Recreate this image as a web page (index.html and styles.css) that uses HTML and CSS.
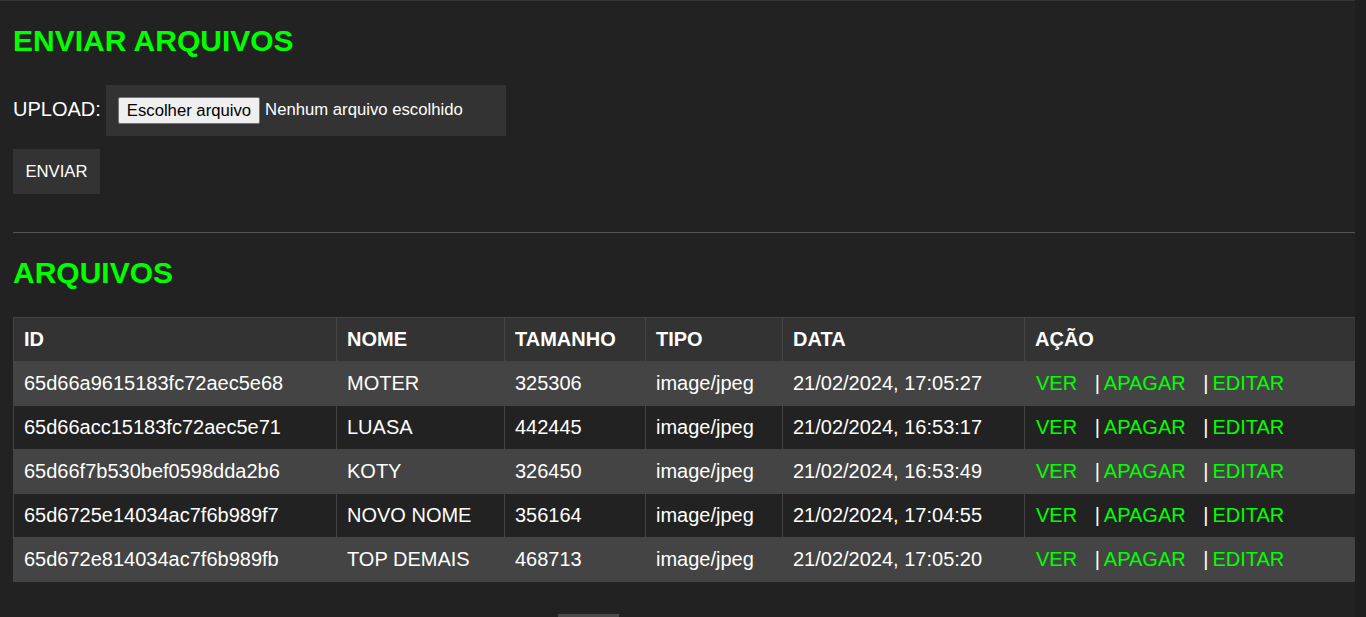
FILE: index.html
```html
<!DOCTYPE html>
<html lang="pt-BR">
<head>
<meta charset="utf-8">
<title>Arquivos</title>
<link rel="stylesheet" href="styles.css">
</head>
<body>
<main class="page">
  <h1 class="title">ENVIAR ARQUIVOS</h1>
  <form class="upload-form">
    <div class="upload-row">
      <span class="upload-label">UPLOAD:</span>
      <div class="file-box">
        <label class="file-btn">Escolher arquivo<input type="file" class="file-input"></label>
        <span class="file-name">Nenhum arquivo escolhido</span>
      </div>
    </div>
    <button type="button" class="send-btn">ENVIAR</button>
  </form>
  <hr class="divider">
  <h1 class="title">ARQUIVOS</h1>
  <table class="files">
    <colgroup>
      <col class="c-id"><col class="c-nome"><col class="c-tam"><col class="c-tipo"><col class="c-data"><col class="c-acao">
    </colgroup>
    <thead>
      <tr><th>ID</th><th>NOME</th><th>TAMANHO</th><th>TIPO</th><th>DATA</th><th>AÇÃO</th></tr>
    </thead>
    <tbody>
      <tr><td>65d66a9615183fc72aec5e68</td><td>MOTER</td><td>325306</td><td>image/jpeg</td><td>21/02/2024, 17:05:27</td><td class="acts"><a href="#">VER</a><span class="sep">|</span><a href="#">APAGAR</a><span class="sep">|</span><a href="#">EDITAR</a></td></tr>
      <tr><td>65d66acc15183fc72aec5e71</td><td>LUASA</td><td>442445</td><td>image/jpeg</td><td>21/02/2024, 16:53:17</td><td class="acts"><a href="#">VER</a><span class="sep">|</span><a href="#">APAGAR</a><span class="sep">|</span><a href="#">EDITAR</a></td></tr>
      <tr><td>65d66f7b530bef0598dda2b6</td><td>KOTY</td><td>326450</td><td>image/jpeg</td><td>21/02/2024, 16:53:49</td><td class="acts"><a href="#">VER</a><span class="sep">|</span><a href="#">APAGAR</a><span class="sep">|</span><a href="#">EDITAR</a></td></tr>
      <tr><td>65d6725e14034ac7f6b989f7</td><td>NOVO NOME</td><td>356164</td><td>image/jpeg</td><td>21/02/2024, 17:04:55</td><td class="acts"><a href="#">VER</a><span class="sep">|</span><a href="#">APAGAR</a><span class="sep">|</span><a href="#">EDITAR</a></td></tr>
      <tr><td>65d672e814034ac7f6b989fb</td><td>TOP DEMAIS</td><td>468713</td><td>image/jpeg</td><td>21/02/2024, 17:05:20</td><td class="acts"><a href="#">VER</a><span class="sep">|</span><a href="#">APAGAR</a><span class="sep">|</span><a href="#">EDITAR</a></td></tr>
    </tbody>
  </table>
</main>
<div class="scroll-thumb"></div>
</body>
</html>
```

FILE: styles.css
```css
html {
  background: #1e1e1e;
  height: 100%;
}

body {
  margin: 0 11px 0 0;
  min-height: 100%;
  background: #222222;
  border-top: 1px solid #363636;
  box-sizing: border-box;
  font-family: "Liberation Sans", Arial, sans-serif;
  color: #ffffff;
  overflow: hidden;
}

.page {
  padding: 0 0 0 13px;
}

.title {
  margin: 22px 0 21px;
  font-size: 30px;
  font-weight: bold;
  color: #00ff00;
  line-height: 35px;
}

.upload-form {
  margin-top: 27px;
}

.upload-row {
  display: flex;
  align-items: center;
  gap: 5px;
}

.upload-label {
  font-size: 20px;
  line-height: 23px;
  margin-top: -3px;
}

.file-box {
  width: 400px;
  height: 51px;
  box-sizing: border-box;
  padding: 0 12px;
  background: #333333;
  display: flex;
  align-items: center;
  font-size: 16.7px;
}

.file-btn {
  display: inline-block;
  height: 27px;
  box-sizing: border-box;
  padding: 0 8px;
  line-height: 25px;
  background: #efefef;
  color: #000;
  border: 1px solid #767676;
  border-radius: 2px;
  margin-right: 5px;
  cursor: default;
}

.file-input {
  display: none;
}

.file-name {
  color: #ffffff;
  margin-top: -2px;
}

.send-btn {
  display: block;
  margin-top: 13px;
  width: 87px;
  height: 45px;
  padding: 0;
  border: 0;
  background: #333333;
  color: #ffffff;
  font-family: "Liberation Sans", Arial, sans-serif;
  font-size: 16.7px;
}

.divider {
  margin: 38px 0 0;
  border: 0;
  border-top: 1px solid #555555;
  height: 0;
}

.files {
  margin-top: 27px;
  width: 1342px;
  table-layout: fixed;
  border-collapse: collapse;
  font-size: 20px;
}

.c-id { width: 323px; }
.c-nome { width: 168px; }
.c-tam { width: 141px; }
.c-tipo { width: 137px; }
.c-data { width: 242px; }
.c-acao { width: 331px; }

.files th,
.files td {
  border: 1px solid #444444;
  padding: 10px 10px;
  line-height: 23px;
  text-align: left;
  white-space: nowrap;
}

.files th {
  background: #333333;
  font-weight: bold;
}

.files tbody tr:nth-child(odd) td {
  background: #444444;
}

.files tbody tr:nth-child(even) td {
  background: #222222;
}

.acts a {
  color: #00ff00;
  text-decoration: none;
  margin-right: 17.5px;
}

.acts a:first-child {
  margin-left: 1px;
}

.acts a:last-child {
  margin-right: 0;
}

.sep {
  margin-right: 4px;
}

.scroll-thumb {
  position: fixed;
  left: 558px;
  bottom: 0;
  width: 61px;
  height: 3px;
  background: #4a4a4a;
}
```
